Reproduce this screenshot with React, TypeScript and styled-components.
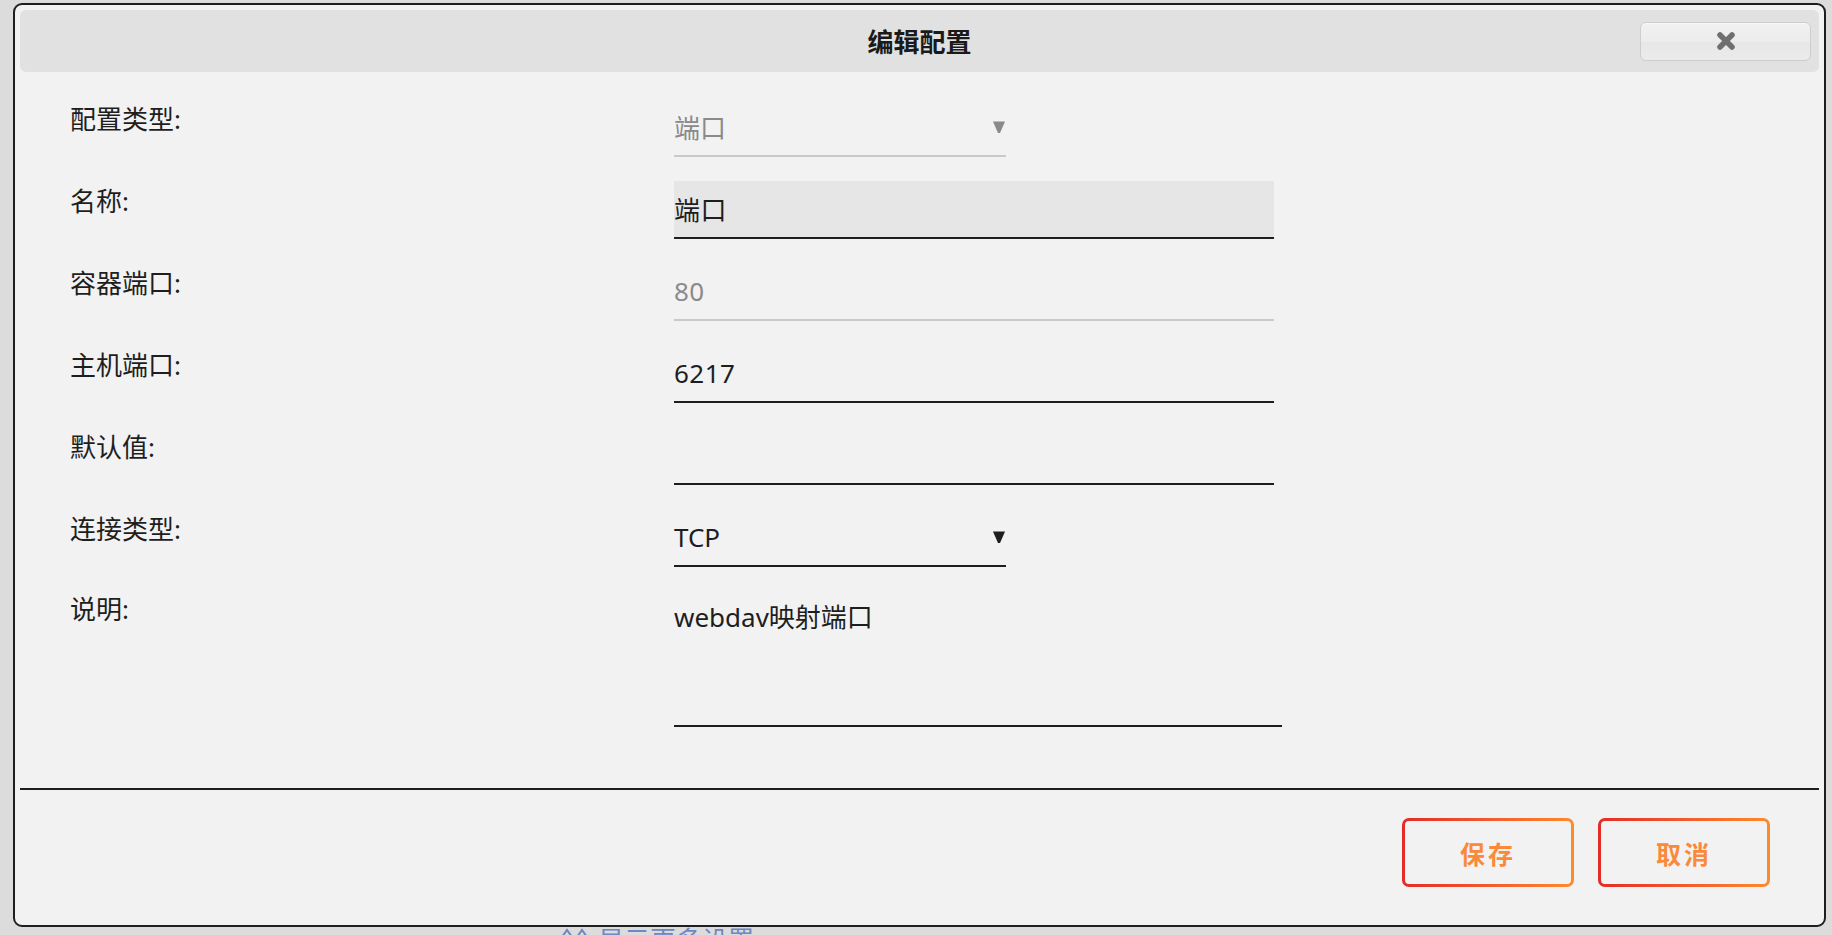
import * as React from 'react';
import styled, { createGlobalStyle } from 'styled-components';

const color = {
  page: '#dcdcdc',
  dialog: '#f2f2f2',
  header: '#e1e1e1',
  text: '#1e1e1e',
  muted: '#8a8a8a',
  line: '#1e1e1e',
  lineMuted: '#c9c9c9',
  filled: '#e6e6e6',
  link: '#6d88c4',
};

const GlobalStyle = createGlobalStyle`
  html, body {
    margin: 0;
    height: 100%;
    overflow: hidden;
    background: ${color.page};
  }

  body {
    font-family: "Noto Sans", "Noto Sans CJK SC", sans-serif;
    color: ${color.text};
  }

  * {
    box-sizing: border-box;
  }
`;

type FieldRow = {
  label: string;
  kind: 'select' | 'input' | 'textarea';
  value: string;
  disabled?: boolean;
  filled?: boolean;
};

const rows: FieldRow[] = [
  { label: '配置类型:', kind: 'select', value: '端口', disabled: true },
  { label: '名称:', kind: 'input', value: '端口', filled: true },
  { label: '容器端口:', kind: 'input', value: '80', disabled: true },
  { label: '主机端口:', kind: 'input', value: '6217' },
  { label: '默认值:', kind: 'input', value: '' },
  { label: '连接类型:', kind: 'select', value: 'TCP' },
  { label: '说明:', kind: 'textarea', value: 'webdav映射端口' },
];

export default function App() {
  return (
    <Page>
      <GlobalStyle />
      <Dialog>
        <Header>
          <Title>编辑配置</Title>
          <CloseButton type="button" aria-label="关闭">
            <svg width="20" height="20" viewBox="0 0 20 20">
              <path d="M4 4 L16 16 M16 4 L4 16" stroke="#6f6f6f" strokeWidth="5.5" strokeLinecap="round" />
            </svg>
          </CloseButton>
        </Header>

        <Form>
          {rows.map((row) => (
            <Row key={row.label}>
              <Label $tall={row.kind === 'textarea'}>{row.label}</Label>
              {row.kind === 'select' && (
                <SelectBox disabled={!!row.disabled}>
                  <span>{row.value}</span>
                  <svg width="12" height="12" viewBox="0 0 12 12">
                    <polygon points="0,0.5 12,0.5 7,12 5,12" fill={row.disabled ? '#8a8a8a' : '#1e1e1e'} />
                  </svg>
                </SelectBox>
              )}
              {row.kind === 'input' && (
                <TextInput
                  readOnly
                  value={row.value}
                  disabled={!!row.disabled}
                  $filled={!!row.filled}
                />
              )}
              {row.kind === 'textarea' && <TextArea readOnly value={row.value} />}
            </Row>
          ))}
        </Form>

        <Divider />

        <Footer>
          <ActionButton type="button">保存</ActionButton>
          <ActionButton type="button">取消</ActionButton>
        </Footer>
      </Dialog>

      <MoreLink>
        <svg width="30" height="16" viewBox="0 0 30 16">
          <path d="M2 10 L7 3 L12 10 M17 10 L22 3 L27 10" stroke={color.link} strokeWidth="2" fill="none" />
        </svg>
        显示更多设置
      </MoreLink>
    </Page>
  );
}

const Page = styled.div`
  padding: 3px 0 0 13px;
`;

const Dialog = styled.div`
  position: relative;
  z-index: 2;
  display: flex;
  flex-direction: column;
  width: 1813px;
  height: 924px;
  border: 2px solid ${color.line};
  border-radius: 9px;
  background: ${color.dialog};
`;

const Header = styled.div`
  display: grid;
  grid-template-columns: 1fr auto 1fr;
  align-items: center;
  height: 62px;
  margin: 5px 5px 0;
  border-radius: 6px;
  background: ${color.header};
`;

const Title = styled.h2`
  grid-column: 2;
  margin: 0;
  font-size: 26px;
  font-weight: bold;
  color: #1a1a1a;
`;

const CloseButton = styled.button`
  grid-column: 3;
  justify-self: end;
  display: flex;
  align-items: center;
  justify-content: center;
  width: 171px;
  height: 39px;
  margin-right: 8px;
  padding: 0;
  border: 1px solid #cdcdcd;
  border-radius: 6px;
  background: linear-gradient(to bottom, #f1f1f1 0%, #ececec 50%, #e7e7e7 51%, #ebebeb 100%);
  box-shadow: inset 0 1px 0 #f8f8f8;
  cursor: pointer;
`;

const Form = styled.div`
  display: flex;
  flex-direction: column;
  gap: 24px;
  padding: 27px 0 61px 55px;
`;

const Row = styled.div`
  display: grid;
  grid-template-columns: 604px auto;
  align-items: start;
`;

const Label = styled.div<{ $tall: boolean }>`
  margin-top: ${(p) => (p.$tall ? '-2px' : '0')};
  font-size: 26px;
  line-height: 40px;
  color: ${color.text};
`;

const SelectBox = styled.div<{ disabled: boolean }>`
  display: flex;
  align-items: center;
  justify-content: space-between;
  width: 332px;
  height: 58px;
  padding-right: 1px;
  border-bottom: 2px solid ${(p) => (p.disabled ? color.lineMuted : color.line)};
  font-size: 26px;
  color: ${(p) => (p.disabled ? color.muted : color.text)};
`;

const TextInput = styled.input<{ $filled: boolean }>`
  display: block;
  width: 600px;
  height: 58px;
  padding: 0;
  border: none;
  border-bottom: 2px solid ${(p) => (p.disabled ? color.lineMuted : color.line)};
  border-radius: 0;
  outline: none;
  background: ${(p) => (p.$filled ? color.filled : 'transparent')};
  font: inherit;
  font-size: 26px;
  letter-spacing: 0.5px;
  color: ${color.text};

  &:disabled {
    color: ${color.muted};
    -webkit-text-fill-color: ${color.muted};
  }
`;

const TextArea = styled.textarea`
  display: block;
  width: 608px;
  height: 136px;
  padding: 7px 0 0;
  border: none;
  border-bottom: 2px solid ${color.line};
  border-radius: 0;
  outline: none;
  background: transparent;
  resize: none;
  font: inherit;
  font-size: 26px;
  line-height: 38px;
  color: ${color.text};
`;

const Divider = styled.hr`
  height: 2px;
  margin: 0 5px;
  border: none;
  background: ${color.line};
`;

const Footer = styled.div`
  display: flex;
  justify-content: flex-end;
  gap: 24px;
  padding: 28px 54px 0 0;
`;

const ActionButton = styled.button`
  width: 172px;
  height: 69px;
  border: 3px solid transparent;
  border-radius: 7px;
  background:
    linear-gradient(${color.dialog}, ${color.dialog}) padding-box,
    linear-gradient(90deg, #e42b27 0%, #f25a2e 50%, #ff8a2b 100%) border-box;
  font-family: "Noto Sans", "Noto Sans CJK SC", sans-serif;
  font-size: 25px;
  font-weight: bold;
  letter-spacing: 3px;
  color: #fa8a3a;
  cursor: pointer;
`;

const MoreLink = styled.div`
  display: flex;
  align-items: flex-start;
  gap: 8px;
  margin: 0 0 0 547px;
  font-size: 26px;
  line-height: 1;
  color: ${color.link};
`;
